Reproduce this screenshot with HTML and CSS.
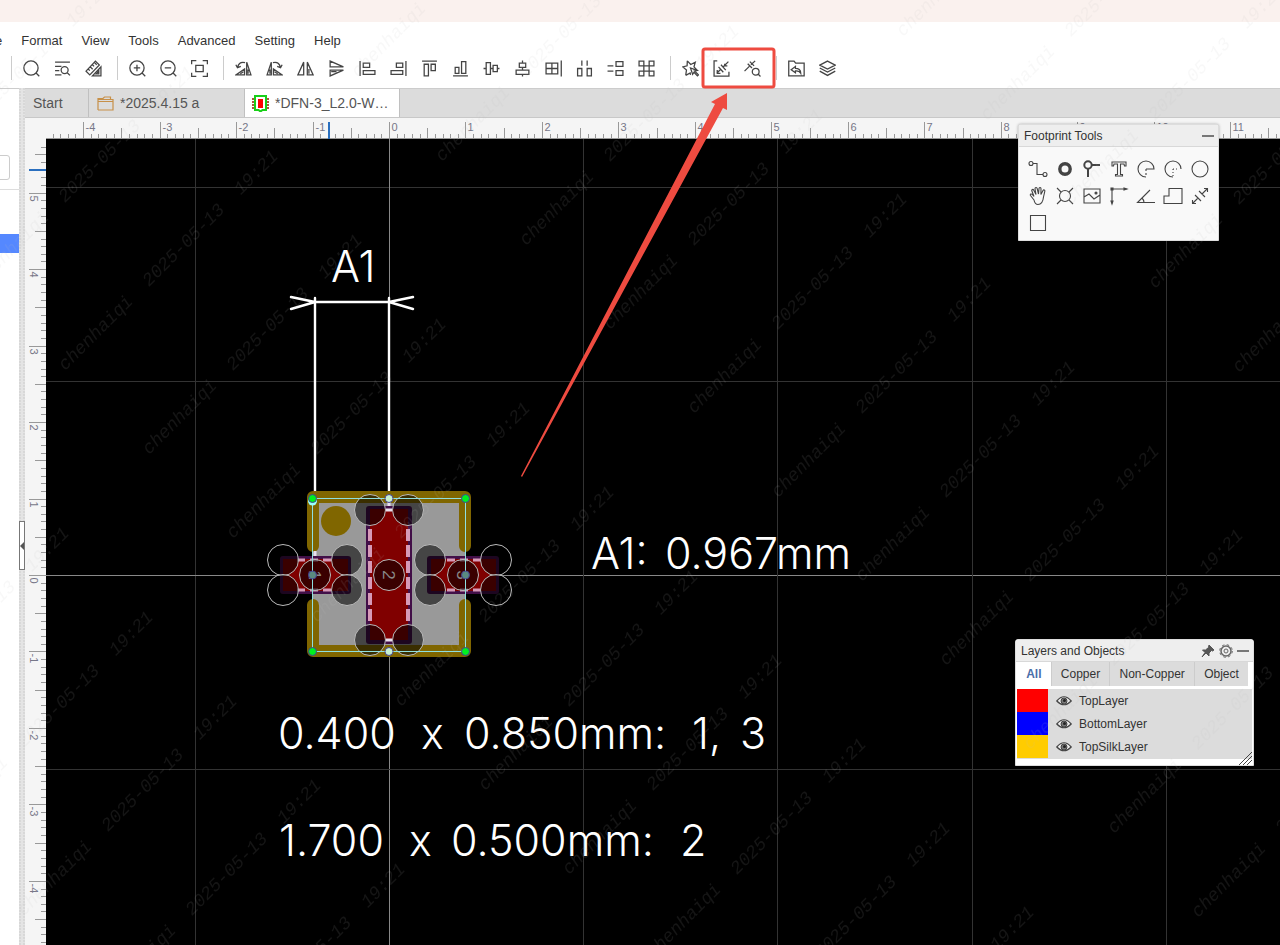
FILE: index.html
```html
<!DOCTYPE html>
<html lang="en">
<head>
<meta charset="utf-8">
<title>Footprint editor</title>
<link rel="stylesheet" href="styles.css">
</head>
<body>
<div class="titlebar"></div>
<header class="header">
  <nav class="menubar">
    <a class="menu menu-cut" href="#">e</a>
    <a class="menu" href="#">Format</a>
    <a class="menu" href="#">View</a>
    <a class="menu" href="#">Tools</a>
    <a class="menu" href="#">Advanced</a>
    <a class="menu" href="#">Setting</a>
    <a class="menu" href="#">Help</a>
  </nav>
  <div class="toolbar">
    <span class="sep"></span>
    <button class="tool" aria-label="Search"><svg class="icon" viewBox="0 0 16 16"><circle cx="7.5" cy="7.5" r="6.7"/><path d="M12.3 12.3l3 3"/></svg></button>
    <button class="tool" aria-label="Find similar"><svg class="icon" viewBox="0 0 16 16"><path d="M1 2h14M1 6h6M1 10h4M1 14h6M12.5 12l2.5 2.5"/><circle cx="10" cy="9.5" r="3.3"/></svg></button>
    <button class="tool" aria-label="Measure"><svg class="icon" viewBox="0 0 16 16"><path d="M1 10.500L9.800 1l3.700 3.700L4.500 14zM3 8.500l1.500 1.500M5 6.500l2.200 2.200M7 4.500l1.500 1.500M9 2.500l2 2M7 15L15 6.500V15zM10.500 13l2.500-2.700V13z"/></svg></button>
    <span class="sep"></span>
    <button class="tool" aria-label="Zoom in"><svg class="icon" viewBox="0 0 16 16"><circle cx="7.500" cy="7.500" r="6.700"/><path d="M12.300 12.300l3 3M4.500 7.500h6M7.500 4.500v6"/></svg></button>
    <button class="tool" aria-label="Zoom out"><svg class="icon" viewBox="0 0 16 16"><circle cx="7.500" cy="7.500" r="6.700"/><path d="M12.300 12.300l3 3M4.500 7.500h6"/></svg></button>
    <button class="tool" aria-label="Fit"><svg class="icon" viewBox="0 0 16 16"><path d="M.6 4V.6H5M11 .6h4.400V4M15.400 12v3.400H11M5 15.400H.6V12M4.500 5h7v6h-7z"/></svg></button>
    <span class="sep"></span>
    <button class="tool" aria-label="Rotate left"><svg class="icon" viewBox="0 0 16 16"><path d="M11 14V2l4 12zM9 14H1l8-5.500zM2.500 6.500C3.500 3 6 1.500 9.500 2.500M.8 4.500l1.500 2.700L5.500 6M12.300 13V9M5 13l3-2"/></svg></button>
    <button class="tool" aria-label="Rotate right"><svg class="icon" viewBox="0 0 16 16"><path d="M5 14V2L1 14zM7 14h8L7 8.500zM13.500 6.500C12.500 3 10 1.500 6.500 2.500M15.200 4.500l-1.500 2.700L10.500 6M3.700 13V9M11 13l-3-2"/></svg></button>
    <button class="tool" aria-label="Flip horizontal"><svg class="icon" viewBox="0 0 16 16"><path d="M6.300 14V2L.8 14zM9.700 14V2l5.500 12zM11.200 13V8.500"/></svg></button>
    <button class="tool" aria-label="Flip vertical"><svg class="icon" viewBox="0 0 16 16"><path d="M2 6.500h12.500L2 1zM2 9.500h12.500L2 15zM3 11h5"/></svg></button>
    <button class="tool" aria-label="Align left"><svg class="icon" viewBox="0 0 16 16"><path d="M1 1v14M4 3h6v4H4zM4 10h11v3.500H4z"/></svg></button>
    <button class="tool" aria-label="Align right"><svg class="icon" viewBox="0 0 16 16"><path d="M15 1v14M6 3h6v4H6zM1 10h11v3.500H1z"/></svg></button>
    <button class="tool" aria-label="Align top"><svg class="icon" viewBox="0 0 16 16"><path d="M1 1h14M3 4h4v11H3zM9.500 4h4v6h-4z"/></svg></button>
    <button class="tool" aria-label="Align bottom"><svg class="icon" viewBox="0 0 16 16"><path d="M1 15h14M3 7h3.500v5.500H3zM9 1.500h4v11H9z"/></svg></button>
    <button class="tool" aria-label="Align middle"><svg class="icon" viewBox="0 0 16 16"><path d="M.5 8H3M7 8h2.500M13.500 8h2M3 2.500h4v11H3zM9.500 5h4v6h-4z"/></svg></button>
    <button class="tool" aria-label="Align centre"><svg class="icon" viewBox="0 0 16 16"><path d="M8 .5V3M8 7v2.500M8 13.500v2M5 3h6v4H5zM2 9.500h12v4H2z"/></svg></button>
    <button class="tool" aria-label="Align grid"><svg class="icon" viewBox="0 0 16 16"><path d="M15.300 .5v15M1 3h11v10H1zM1 8h11M6.500 3v10"/></svg></button>
    <button class="tool" aria-label="Distribute horizontally"><svg class="icon" viewBox="0 0 16 16"><path d="M5.500 .5v5M10.500 .5v5M1.500 8h4v7h-4zM10.500 8h4v7h-4z"/></svg></button>
    <button class="tool" aria-label="Distribute vertically"><svg class="icon" viewBox="0 0 16 16"><path d="M.5 5.500h5.500M.5 10.500h5.500M8.500 1.500h6.500v4.500H8.500zM8.500 10h6.500v4.500H8.500z"/></svg></button>
    <button class="tool" aria-label="Distribute array"><svg class="icon" viewBox="0 0 16 16"><path d="M1 1h4.500v4.500H1zM10.500 1H15v4.500h-4.500zM1 10.500h4.500V15H1zM10.500 10.500H15V15h-4.500zM5.500 5.500h5v5h-5z"/></svg></button>
    <span class="sep"></span>
    <button class="tool" aria-label="Wizard"><svg class="icon" viewBox="0 0 16 16"><path d="M5 .8l3.200 3.400L12.500 2l-1.200 4.500 3 3.200-3.500-.3M3.500 14.500l.7-5L.8 6.500l4-1L5 .8M3.500 14.500l4.200-2.300.3 1.800M8 7.500l2 6 1.300-2 3.200 3.500 1-1-3.200-3.300 2-1z"/></svg></button>
    <button class="tool" aria-label="Check dimension"><svg class="icon" viewBox="0 0 16 16"><path d="M4 .8H1v14.400h14V11M3.500 12.500l4-4M9 7l5.500-5.500M5.200 6.500l4.500 5M7.500 4.500l4.500 5M4 9.500v3h3M11 3.500v2h2.500"/></svg></button>
    <button class="tool" aria-label="Inspect dimension"><svg class="icon" viewBox="0 0 16 16"><path d="M.5 10.500l4.500-4.500M6.500 4.500L10.500.8M3.500 3.500l4 4M5.500 1.500l4 4M13.200 13.200l2.300 2.300"/><circle cx="11" cy="11" r="3.200"/></svg></button>
    <span class="sep"></span>
    <button class="tool" aria-label="Import"><svg class="icon" viewBox="0 0 16 16"><path d="M.7 15V1h5l1.500 2h8V15zM7 6l-4 3.200L7 12v-1.800c2.500-.2 4 .5 5 2.300 0-3-2-4.700-5-4.700z"/></svg></button>
    <button class="tool" aria-label="Layers"><svg class="icon" viewBox="0 0 16 16"><path d="M8 1l7.300 3.800L8 8.500.7 4.800zM.7 7.500L8 11.300l7.300-3.800M.7 10.500L8 14.500l7.300-4"/></svg></button>
  </div>
</header>
<main class="workspace">
  <aside class="sidebar">
    <input class="filter" type="text" aria-label="Filter">
    <div class="tree"><div class="tree-selected"></div></div>
  </aside>
  <div class="splitter"><button class="collapse" aria-label="Collapse sidebar"></button></div>
  <section class="editor">
    <div class="tabs">
      <button class="tab tab-start">Start</button>
      <button class="tab tab-project"><svg class="tab-icon folder" viewBox="0 0 17 17"><path d="M1 15V3.500h5l1.500-1.500h6v2.500M1 6.500h15v8.500H1M1 4.500h15V7"/></svg>*2025.4.15 a</button>
      <button class="tab tab-active"><svg class="tab-icon" viewBox="0 0 17 17"><path d="M0 4h17M0 7h17M0 10h17M0 13h17" stroke="#8d2100" stroke-width="1.500"/><path d="M3 1h11v14h-3.500l-2 1.500-2-1.500H3z" fill="#fff" stroke="#18d018" stroke-width="2"/><path d="M6 4h5v9H6z" fill="#f00"/></svg>*DFN-3_L2.0-W…</button>
    </div>
    <svg class="ruler ruler-top" id="ruler-top"></svg>
    <svg class="ruler ruler-left" id="ruler-left"></svg>
    <svg class="board">
      <g transform="translate(-46 -139)">
        <g id="grid"></g>
        <g class="dimension">
          <path d="M315 298V553M389 298V512M315 302H389M291 297l24 5-24 7M413 297l-24 5 24 7"/>
        </g>
        <rect class="body" x="313" y="499" width="152" height="152"/>
        <path class="silk" d="M313 546V497H465V546M313 605V651H465V605"/>
        <circle class="silk-dot" cx="336" cy="521" r="15"/>
        <path class="dim-rest" d="M315 551v5M389 499v12"/>
        <g class="mask">
          <rect x="280" y="556" width="71" height="38" rx="3"/>
          <rect x="366" y="506" width="46" height="138" rx="3"/>
          <rect x="427" y="556" width="72" height="38" rx="3"/>
        </g>
        <g class="copper">
          <rect x="283" y="559" width="65" height="32"/>
          <rect x="370" y="509" width="38" height="131"/>
          <rect x="431" y="559" width="65" height="32"/>
        </g>
        <path class="dashes" d="M370 529V625M408 529V625"/>
        <path class="dashes dashes-short" d="M297 560H332M297 590H332M447 560H481M447 590H481"/>
        <path class="dim-rest" d="M386 510h6M386 640h6"/>
        <g class="vias">
          <circle cx="283" cy="560" r="15.500"/><circle cx="283" cy="590" r="15.500"/>
          <circle cx="347" cy="560" r="15.500"/><circle cx="347" cy="590" r="15.500"/>
          <circle cx="370" cy="510" r="15.500"/><circle cx="408" cy="510" r="15.500"/>
          <circle cx="370" cy="640" r="15.500"/><circle cx="408" cy="640" r="15.500"/>
          <circle cx="430" cy="560" r="15.500"/><circle cx="430" cy="590" r="15.500"/>
          <circle cx="496" cy="560" r="15.500"/><circle cx="496" cy="590" r="15.500"/>
          <circle cx="315" cy="575" r="15.500"/><circle cx="389" cy="575" r="15.500"/><circle cx="463" cy="575" r="15.500"/>
        </g>
        <g class="pin">
          <text transform="translate(309 575) rotate(90)">1</text>
          <text transform="translate(383 575) rotate(90)">2</text>
          <text transform="translate(457 575) rotate(90)">3</text>
        </g>
        <rect class="selection" x="312.500" y="498.500" width="153" height="153"/>
        <circle class="anchor" cx="312.500" cy="501" r="4.500"/>
        <g class="handles">
          <circle cx="312.500" cy="498.500" r="4"/><circle cx="465.500" cy="498.500" r="4"/>
          <circle cx="312.500" cy="651.500" r="4"/><circle cx="465.500" cy="651.500" r="4"/>
          <circle class="mid" cx="389" cy="498.500" r="4"/><circle class="mid" cx="389" cy="651.500" r="4"/>
          <circle class="dim" cx="312.500" cy="575" r="4"/><circle class="dim" cx="465.500" cy="575" r="4"/>
        </g>
        <g class="label">
          <text y="282"><tspan x="331">A1</tspan></text>
          <text y="569"><tspan x="591">A1:</tspan> <tspan x="665">0.967mm</tspan></text>
          <text y="749"><tspan x="278">0.400</tspan> <tspan x="421">x</tspan> <tspan x="464">0.850mm:</tspan> <tspan x="692">1,</tspan> <tspan x="740">3</tspan></text>
          <text y="856"><tspan x="279">1.700</tspan> <tspan x="409">x</tspan> <tspan x="451">0.500mm:</tspan> <tspan x="680">2</tspan></text>
        </g>
      </g>
    </svg>
  </section>

  <section class="panel footprint">
    <div class="panel-head"><h2 class="panel-title">Footprint Tools</h2><button class="minimize" aria-label="Minimize"></button></div>
    <div class="tool-grid">
      <button class="cell" aria-label="Track"><svg class="thin" viewBox="0 0 20 20"><circle cx="3" cy="4.500" r="2"/><circle cx="17" cy="15.500" r="2"/><path d="M5 4.500h4v11h6"/></svg></button>
      <button class="cell" aria-label="Pad"><svg class="thin" viewBox="0 0 20 20"><circle cx="10" cy="10" r="5.200" stroke-width="3.400"/></svg></button>
      <button class="cell" aria-label="Via"><svg class="thin" viewBox="0 0 20 20"><g stroke-width="2"><circle cx="6" cy="6" r="3.700"/><path d="M10 6h8M6 10v8"/></g></svg></button>
      <button class="cell" aria-label="Text"><svg class="thin" viewBox="0 0 20 20"><path d="M3 3h14v4h-1.500l-.5-2h-3.500v10.500h2V17h-7v-1.500h2V5H5l-.5 2H3z"/></svg></button>
      <button class="cell" aria-label="Arc"><svg class="thin" viewBox="0 0 20 20"><path d="M10 18a8 8 0 1 1 8-8h-8"/><path d="M10 10v8" stroke-dasharray="2 2"/></svg></button>
      <button class="cell" aria-label="Centre arc"><svg class="thin" viewBox="0 0 20 20"><path d="M10 18a8 8 0 1 1 8-8"/><path d="M10 10v8M10 10h5" stroke-dasharray="1 2"/></svg></button>
      <button class="cell" aria-label="Circle"><svg class="thin" viewBox="0 0 20 20"><circle cx="10" cy="10" r="8"/></svg></button>
      <button class="cell" aria-label="Pan"><svg class="thin" viewBox="0 0 20 20"><path d="M6 14L2.500 9.500c-.8-1.500 1-2 2-.8L6 10.500 3.800 4.800c-.4-1.500 1.400-1.900 2-.6L8 8.500 7 2.800c0-1.600 1.900-1.700 2.200-.2L10.500 8 11 2.500c.2-1.500 2-1.300 2 .2L12.900 8.500 15 4.500c.7-1.200 2.200-.5 1.800.8L15.500 11c-.5 5-2.500 7.500-5.500 7.500-2.500 0-3.500-2-4-4.500z"/></svg></button>
      <button class="cell" aria-label="Hole"><svg class="thin" viewBox="0 0 20 20"><circle cx="10" cy="10" r="5.500"/><path d="M2 2l4 4M18 2l-4 4M2 18l4-4M18 18l-4-4"/></svg></button>
      <button class="cell" aria-label="Image"><svg class="thin" viewBox="0 0 20 20"><path d="M2 3h16v14H2zM2 11l5-3 5 5 6-4"/><circle class="solid" cx="14" cy="7" r="1"/></svg></button>
      <button class="cell" aria-label="Origin"><svg class="thin" viewBox="0 0 20 20"><path d="M3 17V3h14"/><path class="solid" d="M2 15l1 3 1-3zM15 2l3 1-3 1zM2 2h2v2H2z"/></svg></button>
      <button class="cell" aria-label="Protractor"><svg class="thin" viewBox="0 0 20 20"><path d="M14 4L1.500 16.500H19M6 12q2 2 2 4.500"/></svg></button>
      <button class="cell" aria-label="Solid region"><svg class="thin" viewBox="0 0 20 20"><path d="M6 2.500h13v15H1V10h5z"/></svg></button>
      <button class="cell" aria-label="Dimension"><svg class="thin" viewBox="0 0 20 20"><path d="M2.500 17.500L8 12M12 8l5.500-5.500M2.500 14v3.500H6M14 2.500h3.500V6M5 9l6 6M9 5l6 6"/></svg></button>
      <button class="cell" aria-label="Rectangle"><svg class="thin" viewBox="0 0 20 20"><path d="M2.500 2.500h15v15h-15z"/></svg></button>
    </div>
  </section>

  <section class="panel layers">
    <div class="panel-head"><h2 class="panel-title">Layers and Objects</h2>
      <button class="head-btn" aria-label="Pin"><svg viewBox="0 0 14 14"><path d="M8 1l5 5-1.500 1-1-.5L8 9v3L5 9l-4 4L4 8.500 1.500 6h3L7.500 3.500z" fill="#555" stroke="#555"/></svg></button>
      <button class="head-btn" aria-label="Settings"><svg viewBox="0 0 14 14" fill="none" stroke="#666"><circle cx="7" cy="7" r="5" stroke-width="1.500"/><circle cx="7" cy="7" r="6.300" stroke-dasharray="2.500 2.450"/><circle cx="7" cy="7" r="2"/></svg></button>
      <button class="minimize" aria-label="Minimize"></button></div>
    <div class="layer-tabs">
      <button class="layer-tab layer-tab-on">All</button><button class="layer-tab">Copper</button><button class="layer-tab">Non-Copper</button><button class="layer-tab">Object</button>
    </div>
    <ul class="layer-list">
      <li class="layer"><span class="swatch swatch-top"></span><button class="eye" aria-label="Toggle TopLayer"><svg viewBox="0 0 16 12"><use href="#eye"/></svg></button>TopLayer</li>
      <li class="layer"><span class="swatch swatch-bottom"></span><button class="eye" aria-label="Toggle BottomLayer"><svg viewBox="0 0 16 12"><use href="#eye"/></svg></button>BottomLayer</li>
      <li class="layer"><span class="swatch swatch-silk"></span><button class="eye" aria-label="Toggle TopSilkLayer"><svg viewBox="0 0 16 12"><use href="#eye"/></svg></button>TopSilkLayer</li>
    </ul>
    <svg class="grip" viewBox="0 0 14 14"><path d="M0 14L13 1M4 14l9-9M8 14l5-5"/></svg>
  </section>
</main>

<svg class="defs"><defs><g id="eye"><path d="M.8 6Q8-2.500 15.200 6 8 13.500 .8 6z" fill="#eee" stroke="#444" stroke-width="1.200"/><circle cx="8" cy="6" r="3" fill="#777" stroke="#444"/><circle cx="8.500" cy="5.500" r="1.500" fill="#222"/></g></defs></svg>
<svg class="overlay" id="watermark"></svg>
<svg class="overlay callout">
  <rect x="703" y="49" width="71" height="38" rx="2"/>
  <path d="M727 93V110L723 108 522 477 521 476 715 104 711 102z"/>
</svg>
<script src="script.js"></script>
</body>
</html>
```

FILE: styles.css
```css
* { box-sizing: border-box; }
body {
  margin: 0;
  height: 100vh;
  display: flex;
  flex-direction: column;
  overflow: hidden;
  background: #fff;
  color: #333;
  font-family: "Liberation Sans", Arial, sans-serif;
  font-size: 12px;
}
button {
  border: 0;
  padding: 0;
  background: none;
  color: inherit;
  font: inherit;
}
.titlebar { height: 22px; flex: none; background: #faf1ee; }
.header { flex: none; padding-bottom: 4px; }
.menubar {
  display: flex;
  align-items: center;
  gap: 19px;
  height: 30px;
  padding-top: 6px;
  font-size: 13px;
}
.menu { color: #333; text-decoration: none; }
.menu-cut { margin-left: -5px; }
.toolbar {
  display: flex;
  align-items: center;
  height: 32px;
  padding-left: 3px;
}
.sep { width: 1px; height: 24px; margin: 0 4px 0 8px; background: #ccc; }
.tool { display: flex; justify-content: center; width: 31px; }
.icon { width: 17px; height: 17px; fill: none; stroke: #444; stroke-width: 1.2; }

.workspace { position: relative; flex: 1; min-height: 0; display: flex; }
.sidebar { width: 19px; border-top: 1px solid #ccc; overflow: hidden; }
.filter {
  display: block;
  width: 30px;
  height: 25px;
  margin: 66px 0 9px -20px;
  border: 1px solid #ccc;
  border-radius: 3px;
}
.tree { padding-top: 44px; border-top: 1px solid #ddd; }
.tree-selected { height: 19px; background: #5588ff; }
.splitter {
  display: flex;
  align-items: center;
  width: 6px;
  padding-top: 57px;
  background: radial-gradient(circle at 1px 1px, #bbb 0, #e4e4e4 1px) 0 0 / 4px 3px;
}
.collapse {
  width: 6px;
  height: 49px;
  background: #fff;
  border: 1px solid #777;
  position: relative;
}
.collapse::after {
  content: "";
  position: absolute;
  right: 0;
  top: 20px;
  border: solid transparent;
  border-width: 4px 4px 4px 0;
  border-right-color: #555;
}
.editor {
  flex: 1;
  min-width: 0;
  display: grid;
  grid-template-columns: 21px 1fr;
  grid-template-rows: 30px 21px 1fr;
}
.tabs {
  grid-column: 1 / -1;
  display: flex;
  background: #dcdcdc;
  border-top: 1px solid #ccc;
  border-bottom: 1px solid #c8c8c8;
  font-size: 14px;
  color: #555;
}
.tab {
  display: flex;
  align-items: center;
  gap: 6px;
  padding: 0 8px;
  border-right: 1px solid #c0c0c0;
}
.tab-start { width: 64px; }
.tab-project { width: 156px; }
.tab-active { width: 155px; padding-left: 7px; background: #fff; }
.tab-icon { width: 17px; height: 17px; fill: none; }
.folder { stroke: #c79049; stroke-width: 1.2; }
.ruler { display: block; width: 100%; height: 100%; background: #f5f5f5; stroke: #999; }
.ruler-top { grid-column: 1 / -1; }
.ruler text { font-size: 11px; fill: #778; stroke: none; }
.ruler .cursor { stroke: #2a6fbf; stroke-width: 2; }
.board { display: block; width: 100%; height: 100%; background: #000; }
#grid { stroke: #333; }
#grid .axis { stroke: #888; }
.dimension { fill: none; stroke: #fff; stroke-width: 2.4; stroke-linecap: round; }
.dim-rest { fill: none; stroke: #e8e0ee; stroke-width: 3; }
.body { fill: #999; }
.silk { fill: none; stroke: #806600; stroke-width: 12; stroke-linecap: round; stroke-linejoin: round; }
.silk-dot { fill: #806600; }
.mask { fill: #420f48; }
.copper { fill: #800000; }
.dashes { fill: none; stroke: #d69ab8; stroke-width: 4; stroke-dasharray: 12 4; }
.dashes-short { stroke-width: 3; stroke-dasharray: 8 5; }
.vias { fill: rgba(0, 0, 0, .55); stroke: #bbb; }
.pin { fill: #888; font-size: 17px; text-anchor: middle; }
.selection { fill: none; stroke: #8fe0e0; }
.anchor { fill: #9ff; }
.handles { fill: #00f020; stroke: #444090; }
.handles .mid { fill: #c8f0d0; }
.handles .dim { fill: #5a8a80; }
.label { fill: #fff; font-family: Inter, "Open Sans", sans-serif; font-size: 43px; font-weight: 300; }

.panel {
  position: absolute;
  background: #f9f9f9;
  border: 1px solid #ddd;
  border-radius: 3px 3px 0 0;
  box-shadow: 0 0 3px rgba(0, 0, 0, .3);
}
.panel-head {
  display: flex;
  align-items: center;
  gap: 4px;
  height: 22px;
  padding: 0 4px 0 5px;
  background: #eee;
  border-bottom: 1px solid #d8d8d8;
}
.panel-title { flex: 1; margin: 0; font-size: 12px; font-weight: 400; }
.minimize { width: 12px; height: 2px; background: #777; }
.head-btn { width: 14px; height: 14px; }
.head-btn svg { display: block; }
.footprint { top: 36px; right: 61px; width: 201px; }
.tool-grid {
  display: grid;
  grid-template-columns: repeat(7, 27px);
  grid-auto-rows: 27px;
  justify-content: center;
  padding: 8px 0 4px;
}
.cell { display: flex; align-items: center; justify-content: center; }
.thin { width: 20px; height: 20px; fill: none; stroke: #444; stroke-width: 1.1; }
.thin .solid { fill: #444; }
.layers { top: 551px; right: 26px; width: 239px; background: #fff; padding-bottom: 6px; }
.layer-tabs { display: flex; height: 24px; margin: 0 5px 3px 1px; }
.layer-tab { flex: auto; background: #dcdcdc; border-left: 1px solid #ccc; }
.layer-tab-on { background: #fff; border: 0; color: #4a6ea9; font-weight: 700; }
.layer-list { list-style: none; margin: 0 1px; padding: 0 0 1px; background: #dcdcdc; }
.layer { display: flex; align-items: center; height: 23px; }
.swatch { width: 31px; height: 23px; margin-right: 8px; }
.swatch-top { background: #f00; }
.swatch-bottom { background: #00f; }
.swatch-silk { background: #fc0; }
.eye { width: 16px; height: 12px; margin-right: 7px; }
.eye svg { display: block; }
.grip { position: absolute; right: 0; bottom: 0; width: 14px; height: 14px; stroke: #444; }
.defs { position: absolute; width: 0; height: 0; }
.overlay { position: fixed; inset: 0; width: 100%; height: 100%; pointer-events: none; }
#watermark {
  fill: rgba(190, 190, 190, .11);
  font: italic 18px "Liberation Mono", monospace;
  white-space: pre;
}
.callout rect { fill: none; stroke: #ee4b40; stroke-width: 3; }
.callout path { fill: #ee4b40; }
```

FILE: script.js
```js
const NS = "http://www.w3.org/2000/svg";
function add(parent, name, attrs, text) {
  const el = document.createElementNS(NS, name);
  for (const key in attrs) el.setAttribute(key, attrs[key]);
  if (text !== undefined) el.textContent = text;
  parent.appendChild(el);
}

const UNIT = 76.47;
const topRuler = document.getElementById("ruler-top");
const leftRuler = document.getElementById("ruler-left");
const width = topRuler.clientWidth || innerWidth;

for (let i = -44; 365 + i * UNIT / 10 < width; i++) {
  const x = Math.round(364 + i * UNIT / 10) + 0.5;
  const size = i % 10 === 0 ? 17 : i % 5 === 0 ? 11 : 5;
  add(topRuler, "path", { d: `M${x} 21v-${size}` });
  if (i % 10 === 0) add(topRuler, "text", { x: x + 2, y: 13 }, i / 10);
}
add(topRuler, "path", { d: `M21 20.500H${width}` });
add(topRuler, "path", { class: "cursor", d: "M304 4V21" });

for (let i = -Math.floor((innerHeight - 575) * 10 / UNIT); i < 57; i++) {
  const y = Math.round(436 - i * UNIT / 10) + 0.5;
  const size = i % 10 === 0 ? 17 : i % 5 === 0 ? 11 : 5;
  add(leftRuler, "path", { d: `M21 ${y}h-${size}` });
  if (i % 10 === 0) add(leftRuler, "text", { transform: `translate(5 ${y + 2}) rotate(90)` }, i / 10);
}
add(leftRuler, "path", { class: "cursor", d: "M4 31H21" });

const grid = document.getElementById("grid");
for (let i = -2; i < 20; i++) {
  const c = i === 0 ? "axis" : "line";
  const step = Math.round(i * 194.2);
  add(grid, "path", { class: c, d: `M${389.5 + step} 139V4000` });
  add(grid, "path", { class: c, d: `M46 ${575.5 + step}H4000` });
}

const mark = document.getElementById("watermark");
for (let j = -8; j < 9; j++) {
  for (let i = -16; i < 24; i++) {
    const x = 65 + i * 84 + j * 293;
    const y = 371 + i * 84 - j * 293;
    if (x < -200 || x > innerWidth || y < 0 || y > innerHeight + 210) continue;
    add(mark, "text", { transform: `translate(${x} ${y}) rotate(-45)` }, "chenhaiqi\u00a0\u00a02025-05-13\u00a0\u00a019:21");
  }
}
```
